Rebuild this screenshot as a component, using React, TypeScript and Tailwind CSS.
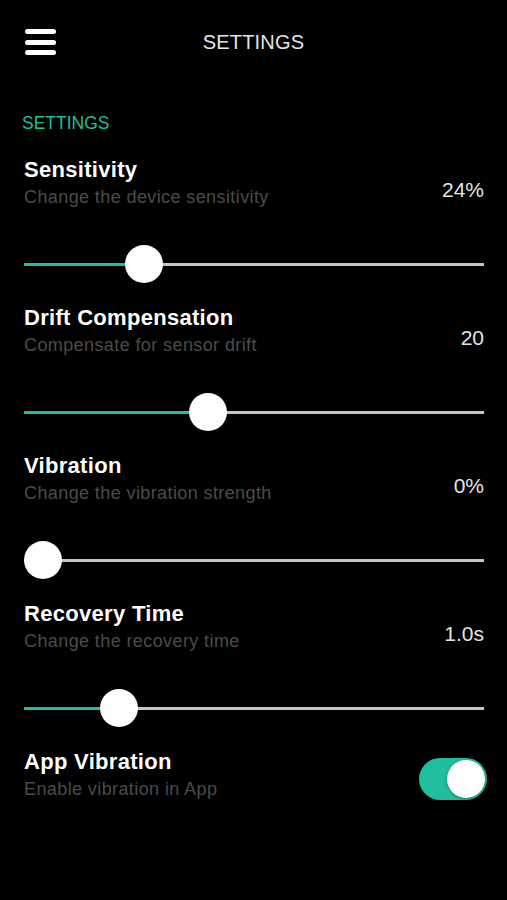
import React from 'react';

type SliderSetting = {
  title: string;
  subtitle: string;
  value: string;
  position: number; // 0..1
};

const sliders: SliderSetting[] = [
  { title: 'Sensitivity', subtitle: 'Change the device sensitivity', value: '24%', position: 0.24 },
  { title: 'Drift Compensation', subtitle: 'Compensate for sensor drift', value: '20', position: 0.39 },
  { title: 'Vibration', subtitle: 'Change the vibration strength', value: '0%', position: 0 },
  { title: 'Recovery Time', subtitle: 'Change the recovery time', value: '1.0s', position: 0.18 },
];

function Slider({ position }: { position: number }) {
  // thumb is 38px, track is the full row width
  const center = `calc(19px + ${position} * (100% - 38px))`;
  return (
    <div className="relative h-[38px] w-full">
      <div className="absolute left-0 right-0 top-[17.5px] h-[3px] bg-[#c4c4c4]" />
      <div className="absolute left-0 top-[17.5px] h-[3px] bg-[#1dbf9e]" style={{ width: center }} />
      <div
        className="absolute top-0 h-[38px] w-[38px] -translate-x-1/2 rounded-full bg-white"
        style={{ left: center }}
      />
    </div>
  );
}

function SettingHeader({ title, subtitle }: { title: string; subtitle: string }) {
  return (
    <div>
      <div className="text-[22px] font-bold leading-[24px] tracking-[0.3px] text-white">{title}</div>
      <div className="mt-[5px] text-[18px] leading-[20px] tracking-[0.4px] text-[#4b4b4b]">{subtitle}</div>
    </div>
  );
}

export default function App() {
  return (
    <div className="min-h-[900px] w-full bg-black font-['Liberation_Sans',Arial,sans-serif]">
      <div className="grid grid-cols-[1fr_auto_1fr] items-center pt-[29px]">
        <div className="flex flex-col gap-[5.5px] pl-[25px]">
          <div className="h-[5px] w-[31px] rounded-full bg-white" />
          <div className="h-[5px] w-[31px] rounded-full bg-white" />
          <div className="h-[5px] w-[31px] rounded-full bg-white" />
        </div>
        <div className="text-[20px] leading-[24px] tracking-[0.2px] text-[#e4e4e4]">SETTINGS</div>
        <div />
      </div>

      <div className="mt-[58px] pl-[22px] text-[17.5px] leading-[20px] text-[#1dbf9e]">SETTINGS</div>

      <div className="mt-[25px] flex flex-col gap-[23px] pl-[24px] pr-[23px]">
        {sliders.map((s) => (
          <div key={s.title}>
            <div className="flex items-start justify-between">
              <SettingHeader title={s.title} subtitle={s.subtitle} />
              <div className="pt-[20px] text-[21px] leading-[24px] text-[#e4e4e4]">{s.value}</div>
            </div>
            <div className="mt-[38px]">
              <Slider position={s.position} />
            </div>
          </div>
        ))}

        <div className="flex items-start justify-between">
          <SettingHeader title="App Vibration" subtitle="Enable vibration in App" />
          <div className="mr-[-3px] mt-[8px] flex h-[42px] w-[68px] items-center justify-end rounded-full bg-[#1dbf9e] p-[2px]">
            <div className="h-[38px] w-[38px] rounded-full bg-white shadow-[0_1px_3px_rgba(0,0,0,0.35)]" />
          </div>
        </div>
      </div>
    </div>
  );
}
